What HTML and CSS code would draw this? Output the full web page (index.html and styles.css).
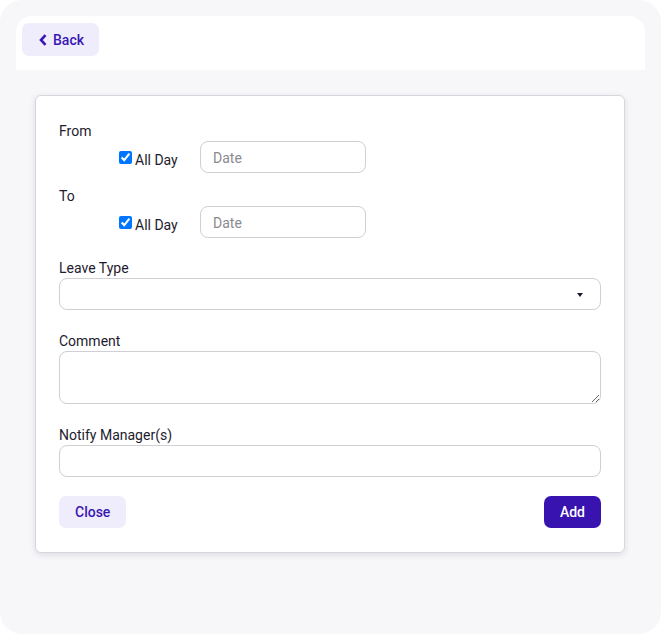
FILE: index.html
```html
<!DOCTYPE html>
<html>
<head>
<meta charset="utf-8">
<link rel="stylesheet" href="styles.css">
</head>
<body>
<div class="shell">
  <div class="topbar">
    <button class="btn btn-soft back-btn">
      <svg class="chev" width="8" height="12" viewBox="0 0 8 12"><path d="M6.5 1.2 L2 6 L6.5 10.8" fill="none" stroke="currentColor" stroke-width="2.6" stroke-linejoin="miter"/></svg>
      Back
    </button>
  </div>
  <div class="card">
    <div class="label">From</div>
    <div class="date-row">
      <label class="allday"><input type="checkbox" checked> All Day</label>
      <input class="field date" type="text" placeholder="Date">
    </div>
    <div class="label gap-sm">To</div>
    <div class="date-row">
      <label class="allday"><input type="checkbox" checked> All Day</label>
      <input class="field date" type="text" placeholder="Date">
    </div>
    <div class="label gap-md">Leave Type</div>
    <div class="field select"><span class="caret"></span></div>
    <div class="label gap-lg">Comment</div>
    <textarea class="field area"></textarea>
    <div class="label gap-lg">Notify Manager(s)</div>
    <input class="field full" type="text">
    <div class="actions">
      <button class="btn btn-soft">Close</button>
      <button class="btn btn-primary">Add</button>
    </div>
  </div>
</div>
</body>
</html>
```

FILE: styles.css
```css
html, body {
  margin: 0;
  padding: 0;
  background: #ffffff;
}
body {
  font-family: Roboto, "Liberation Sans", sans-serif;
  color: #1e1b2e;
  font-size: 14px;
}
.shell {
  box-sizing: border-box;
  width: 661px;
  height: 634px;
  background: #f7f7f9;
  border-radius: 22px;
  padding: 16px;
}
.topbar {
  background: #ffffff;
  border-radius: 16px 16px 0 0;
  height: 54px;
  box-sizing: border-box;
  padding: 7px 6px;
}
.btn {
  font-family: Roboto, "Liberation Sans", sans-serif;
  font-size: 14px;
  font-weight: 500;
  border: none;
  border-radius: 7px;
  height: 32px;
  padding: 0 16px;
  cursor: pointer;
}
.btn-soft {
  background: #efedfb;
  color: #3a17b2;
}
.btn-primary {
  background: #3913b0;
  color: #ffffff;
  padding: 0 16px;
}
.back-btn {
  height: 33px;
  width: 77px;
  display: flex;
  align-items: center;
  padding: 0 0 0 17px;
  gap: 6px;
}
.chev {
  display: block;
}
.card {
  margin: 25px 20px 0 19px;
  background: #ffffff;
  border: 1px solid #d6d6dc;
  border-radius: 6px;
  box-shadow: 0 2px 6px rgba(40, 30, 80, 0.12);
  padding: 25px 23px 24px 23px;
}
.label {
  line-height: 20px;
  height: 20px;
}
.gap-sm { margin-top: 13px; }
.gap-md { margin-top: 20px; }
.gap-lg { margin-top: 21px; }
.date-row {
  display: flex;
  align-items: center;
  padding-left: 60px;
}
.allday {
  width: 81px;
  display: flex;
  align-items: center;
  padding-top: 5px;
  line-height: 20px;
}
.allday input {
  margin: 0 3px 0 0;
  width: 13px;
  height: 13px;
  position: relative;
  top: -2px;
}
.field {
  box-sizing: border-box;
  border: 1px solid #cfcfd4;
  border-radius: 8px;
  height: 32px;
  background: #ffffff;
  font-family: Roboto, "Liberation Sans", sans-serif;
  font-size: 14px;
  padding: 1px 12px 0;
  outline: none;
  display: block;
}
.field::placeholder {
  color: #8a8a90;
}
.date {
  width: 166px;
}
.select {
  width: 100%;
  position: relative;
}
.caret {
  position: absolute;
  right: 17px;
  top: 14px;
  width: 0;
  height: 0;
  border-left: 3.5px solid transparent;
  border-right: 3.5px solid transparent;
  border-top: 4px solid #1e1b2e;
}
.area {
  width: 100%;
  height: 53px;
  resize: vertical;
  padding: 8px 12px;
}
.full {
  width: 100%;
}
.actions {
  display: flex;
  justify-content: space-between;
  margin-top: 19px;
}
```
